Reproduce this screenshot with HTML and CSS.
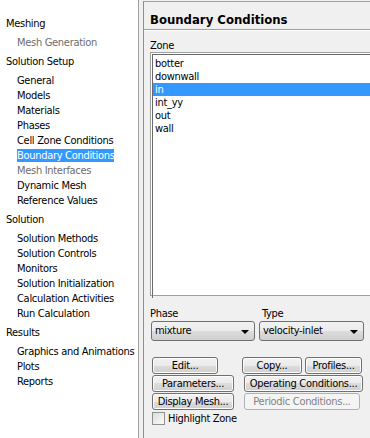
FILE: index.html
```html
<!DOCTYPE html>
<html lang="en">
<head>
  <meta charset="UTF-8" />
  <title>Boundary Conditions</title>
  <link rel="stylesheet" href="styles.css">
</head>
<body>
  <div class="tree">
    <div class="group">
      <div class="head">Meshing</div>
      <div class="items">
        <div class="item disabled">Mesh Generation</div>
      </div>
    </div>
    <div class="group">
      <div class="head">Solution Setup</div>
      <div class="items">
        <div class="item">General</div>
        <div class="item">Models</div>
        <div class="item">Materials</div>
        <div class="item">Phases</div>
        <div class="item">Cell Zone Conditions</div>
        <div class="item"><span class="selected">Boundary Conditions</span></div>
        <div class="item disabled">Mesh Interfaces</div>
        <div class="item">Dynamic Mesh</div>
        <div class="item">Reference Values</div>
      </div>
    </div>
    <div class="group">
      <div class="head">Solution</div>
      <div class="items">
        <div class="item">Solution Methods</div>
        <div class="item">Solution Controls</div>
        <div class="item">Monitors</div>
        <div class="item">Solution Initialization</div>
        <div class="item">Calculation Activities</div>
        <div class="item">Run Calculation</div>
      </div>
    </div>
    <div class="group">
      <div class="head">Results</div>
      <div class="items">
        <div class="item">Graphics and Animations</div>
        <div class="item">Plots</div>
        <div class="item">Reports</div>
      </div>
    </div>
  </div>

  <div class="splitter"></div>

  <div class="panel">
    <div class="panel-title">Boundary Conditions</div>
    <div class="panel-body">
      <div class="label">Zone</div>
      <div class="listbox">
        <div class="listbox-inner">
          <div class="row">botter</div>
          <div class="row">downwall</div>
          <div class="row active">in</div>
          <div class="row">int_yy</div>
          <div class="row">out</div>
          <div class="row">wall</div>
        </div>
      </div>

      <div class="selects">
        <div class="field">
          <div class="label">Phase</div>
          <div class="combo">mixture<span class="arrow"></span></div>
        </div>
        <div class="field field-type">
          <div class="label">Type</div>
          <div class="combo">velocity-inlet<span class="arrow"></span></div>
        </div>
      </div>

      <div class="buttons">
        <div class="btn-row">
          <button class="btn btn-edit">Edit...</button>
          <button class="btn btn-copy">Copy...</button>
          <button class="btn btn-profiles">Profiles...</button>
        </div>
        <div class="btn-row">
          <button class="btn btn-wide">Parameters...</button>
          <button class="btn btn-operating">Operating Conditions...</button>
        </div>
        <div class="btn-row">
          <button class="btn btn-wide">Display Mesh...</button>
          <button class="btn btn-periodic" disabled>Periodic Conditions...</button>
        </div>
      </div>

      <label class="check"><span class="box"></span>Highlight Zone</label>
    </div>
  </div>
</body>
</html>
```

FILE: styles.css
```css
body {
  margin: 0;
  width: 370px;
  height: 438px;
  overflow: hidden;
  display: flex;
  font-family: "DejaVu Sans Condensed", "Liberation Sans", sans-serif;
  font-stretch: condensed;
  font-size: 11px;
  letter-spacing: -0.3px;
  color: #000;
  background: #f0f0f0;
}
.tree {
  width: 139px;
  flex: none;
  background: #fff;
  border-right: 1px solid #a0a0a0;
  padding-top: 16px;
  box-sizing: border-box;
  white-space: nowrap;
}
.group {
  margin-bottom: 4px;
}
.head {
  height: 15px;
  line-height: 15px;
  padding-left: 6px;
}
.items {
  margin-top: 4px;
}
.item {
  height: 15px;
  line-height: 15px;
  padding-left: 17px;
}
.item.disabled {
  color: #6d6d6d;
}
.selected {
  background: #3399ff;
  color: #fff;
}
.splitter {
  width: 4px;
  flex: none;
  background: #f0f0f0;
}
.panel {
  flex: 1;
  min-width: 0;
  overflow: hidden;
  border-left: 1px solid #8e8e8e;
  border-top: 1px solid #a0a0a0;
  margin-top: 1px;
}
.panel-title {
  height: 18px;
  line-height: 18px;
  padding: 9px 0 0 6px;
  font-size: 13px;
  font-weight: bold;
  letter-spacing: 0;
  border-bottom: 1px solid #a0a0a0;
  box-shadow: 0 1px 0 #fff;
}
.panel-body {
  padding: 10px 6px 0 6px;
}
.label {
  height: 12px;
  line-height: 12px;
}
.listbox {
  margin-right: -20px;
  height: 244px;
  border: 1px solid #a0a0a0;
  background: #fff;
  padding: 1px 0 0 1px;
  box-sizing: border-box;
}
.listbox-inner {
  height: 100%;
  border-left: 1px solid #6a6a6a;
  border-top: 1px solid #6a6a6a;
  padding-top: 2px;
}
.row {
  height: 13px;
  line-height: 13px;
  padding-left: 2px;
}
.row.active {
  background: #3399ff;
  color: #fff;
}
.selects {
  display: flex;
  gap: 4px;
  margin-top: 12px;
  padding-left: 1px;
}
.field .label {
  margin-left: -1px;
  margin-bottom: 1px;
}
.field-type .label {
  margin-left: 3px;
}
.combo {
  position: relative;
  width: 104px;
  height: 20px;
  line-height: 18px;
  padding-left: 3px;
  box-sizing: border-box;
  border: 1px solid #707070;
  border-radius: 3px;
  background: linear-gradient(#f2f2f2 0%, #ebebeb 50%, #dddddd 50%, #cfcfcf 100%);
}
.field-type .combo {
  width: 105px;
}
.arrow {
  position: absolute;
  right: 5px;
  top: 8px;
  border-left: 4px solid transparent;
  border-right: 4px solid transparent;
  border-top: 4px solid #000;
}
.buttons {
  display: flex;
  flex-direction: column;
  gap: 1px;
  margin-top: 16px;
  padding-left: 2px;
}
.btn-row {
  display: flex;
}
.btn {
  height: 17px;
  padding: 0;
  font: inherit;
  letter-spacing: inherit;
  color: #000;
  border: 1px solid #707070;
  border-radius: 3px;
  background: linear-gradient(#f2f2f2 0%, #ebebeb 50%, #dddddd 50%, #cfcfcf 100%);
  box-shadow: inset 0 0 0 1px #fcfcfc;
}
.btn:disabled {
  color: #838383;
  border-color: #adb2b5;
  background: #f4f4f4;
  box-shadow: none;
}
.btn-edit {
  width: 66px;
  margin-right: 24px;
}
.btn-copy {
  width: 60px;
  margin-right: 3px;
}
.btn-profiles {
  width: 57px;
}
.btn-wide {
  width: 82px;
  margin-right: 10px;
}
.btn-operating {
  width: 119px;
}
.btn-periodic {
  width: 116px;
}
.check {
  display: flex;
  align-items: center;
  margin-top: 1px;
  padding-left: 2px;
  height: 14px;
}
.box {
  width: 11px;
  height: 11px;
  margin-right: 3px;
  border: 1px solid #8e8f8f;
  background: linear-gradient(135deg, #dcdcdc, #fbfbfb);
}
```
